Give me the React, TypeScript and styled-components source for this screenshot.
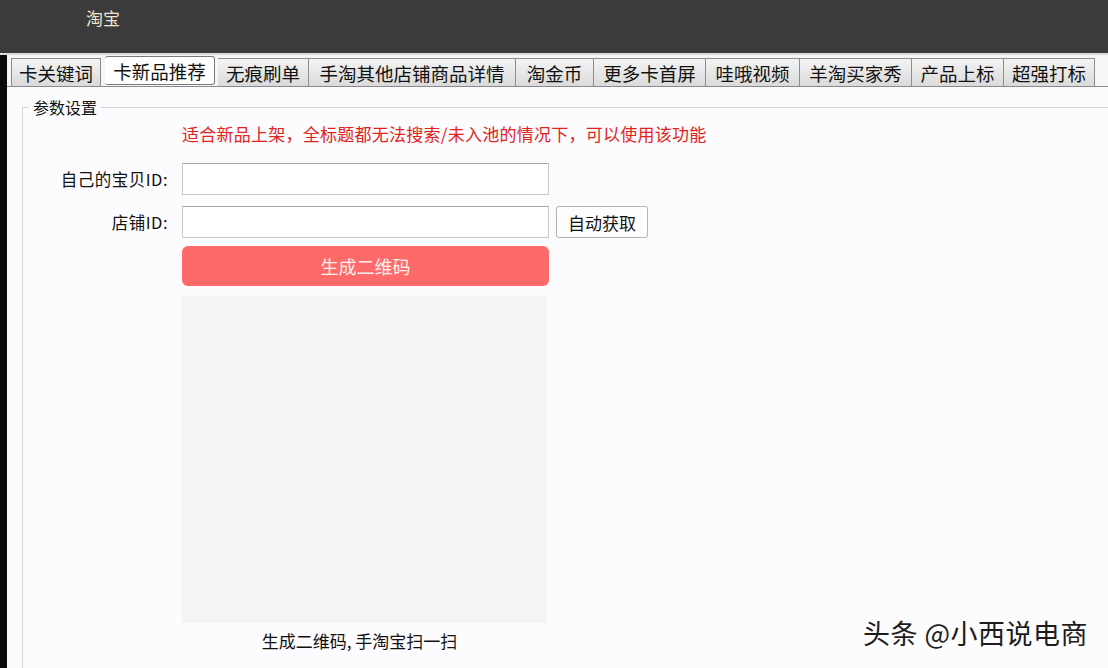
import React from "react";
import styled, { createGlobalStyle } from "styled-components";

const GlobalStyle = createGlobalStyle`
  html, body {
    margin: 0;
    padding: 0;
    width: 1108px;
    height: 668px;
    overflow: hidden;
    background: #fcfbfd;
    font-family: "Noto Sans CJK SC", "Noto Sans", sans-serif;
  }
`;

const Page = styled.div`
  width: 1108px;
  height: 668px;
  display: flex;
  flex-direction: column;
  position: relative;
`;

const TitleBar = styled.div`
  height: 55px;
  flex-shrink: 0;
  background: #3b3b3b;
  border-bottom: 2px solid #d8d8d8;
  display: flex;
  align-items: flex-start;
  padding: 6px 0 0 86px;
  box-sizing: border-box;
  color: #ece5d2;
  font-size: 17px;
  line-height: 24px;
`;

const Body = styled.div`
  flex: 1;
  display: flex;
`;

const LeftEdge = styled.div`
  width: 7px;
  background: #0a0a0a;
`;

const Main = styled.div`
  flex: 1;
  display: flex;
  flex-direction: column;
  background: #fcfbfd;
`;

const TabBar = styled.div`
  display: flex;
  align-items: flex-end;
  height: 32px;
  padding: 0 0 0 4px;
  background: #f6f6f6;
  border-bottom: 1px solid #8a8a8a;
  box-sizing: border-box;
`;

const Tab = styled.div<{ $active?: boolean; $w: number }>`
  width: ${(p) => p.$w}px;
  height: ${(p) => (p.$active ? "29px" : "28px")};
  margin: ${(p) => (p.$active ? "0 3px 1px 4px" : "0")};
  box-sizing: border-box;
  display: flex;
  align-items: center;
  justify-content: center;
  font-size: 18.5px;
  color: #111;
  white-space: nowrap;
  border: 1px solid ${(p) => (p.$active ? "#7a7a7a" : "#8c8c8c")};
  border-bottom: ${(p) => (p.$active ? "1px solid #7a7a7a" : "none")};
  border-radius: ${(p) => (p.$active ? "3px" : "0")};
  background: ${(p) =>
    p.$active ? "#ffffff" : "linear-gradient(#f4f4f4, #dadada)"};
  & + & {
    border-left: ${(p) => (p.$active ? "1px solid #7a7a7a" : "none")};
  }
`;

const Group = styled.div`
  flex: 1;
  margin: 20px 0 0 15px;
  border-top: 1px solid #d6d6d6;
  border-left: 1px solid #d6d6d6;
  position: relative;
  display: flex;
  flex-direction: column;
`;

const Legend = styled.div`
  position: absolute;
  top: -13px;
  left: 6px;
  padding: 0 4px;
  background: #fcfbfd;
  font-size: 16px;
  line-height: 24px;
  color: #111;
`;

const Form = styled.div`
  display: grid;
  grid-template-columns: 147px 367px auto;
  column-gap: 12px;
  row-gap: 11px;
  padding-top: 13px;
  align-items: center;
`;

const Notice = styled.div`
  grid-column: 2 / 4;
  color: #e2231d;
  font-size: 17px;
  letter-spacing: 0.25px;
  line-height: 26px;
  margin-bottom: 5px;
  white-space: nowrap;
`;

const Label = styled.div`
  grid-column: 1;
  text-align: right;
  font-size: 16.5px;
  letter-spacing: 0.5px;
  color: #111;
  padding-right: 2px;
`;

const Input = styled.div`
  grid-column: 2;
  height: 32px;
  border: 1px solid #c8c8c8;
  border-top-color: #a8a8a8;
  background: #fff;
  box-sizing: border-box;
`;

const SmallButton = styled.div`
  grid-column: 3;
  justify-self: start;
  margin-left: -5px;
  width: 92px;
  height: 32px;
  box-sizing: border-box;
  border: 1px solid #b4b4b4;
  border-radius: 3px;
  background: #fdfdfd;
  display: flex;
  align-items: center;
  justify-content: center;
  font-size: 17px;
  color: #111;
`;

const PrimaryButton = styled.div`
  grid-column: 2;
  height: 40px;
  margin-top: -3px;
  border-radius: 6px;
  background: #fe6a6a;
  display: flex;
  align-items: center;
  justify-content: center;
  color: #fff3f0;
  font-size: 18px;
`;

const QrBox = styled.div`
  grid-column: 2;
  width: 365px;
  height: 327px;
  margin-top: -1px;
  background: #f4f3f5;
`;

const Caption = styled.div`
  grid-column: 2;
  margin-top: -4px;
  padding-right: 12px;
  text-align: center;
  font-size: 17px;
  line-height: 22px;
  color: #111;
`;

const Watermark = styled.div`
  position: absolute;
  right: 20px;
  bottom: 16px;
  font-size: 27px;
  letter-spacing: 0.5px;
  color: #1c1c1c;
`;

const tabs = [
  { label: "卡关键词", w: 90 },
  { label: "卡新品推荐", w: 110 },
  { label: "无痕刷单", w: 91 },
  { label: "手淘其他店铺商品详情", w: 207 },
  { label: "淘金币", w: 78 },
  { label: "更多卡首屏", w: 112 },
  { label: "哇哦视频", w: 94 },
  { label: "羊淘买家秀", w: 112 },
  { label: "产品上标", w: 92 },
  { label: "超强打标", w: 91 },
];

const App: React.FC = () => {
  return (
    <Page>
      <GlobalStyle />
      <TitleBar>淘宝</TitleBar>
      <Body>
        <LeftEdge />
        <Main>
          <TabBar>
            {tabs.map((t, i) => (
              <Tab key={t.label} $w={t.w} $active={i === 1}>
                {t.label}
              </Tab>
            ))}
          </TabBar>
          <Group>
            <Legend>参数设置</Legend>
            <Form>
              <Notice>
                适合新品上架，全标题都无法搜索/未入池的情况下，可以使用该功能
              </Notice>
              <Label>自己的宝贝ID:</Label>
              <Input />
              <Label>店铺ID:</Label>
              <Input />
              <SmallButton>自动获取</SmallButton>
              <PrimaryButton>生成二维码</PrimaryButton>
              <QrBox />
              <Caption>生成二维码, 手淘宝扫一扫</Caption>
            </Form>
          </Group>
        </Main>
      </Body>
      <Watermark>头条 @小西说电商</Watermark>
    </Page>
  );
};

export default App;
